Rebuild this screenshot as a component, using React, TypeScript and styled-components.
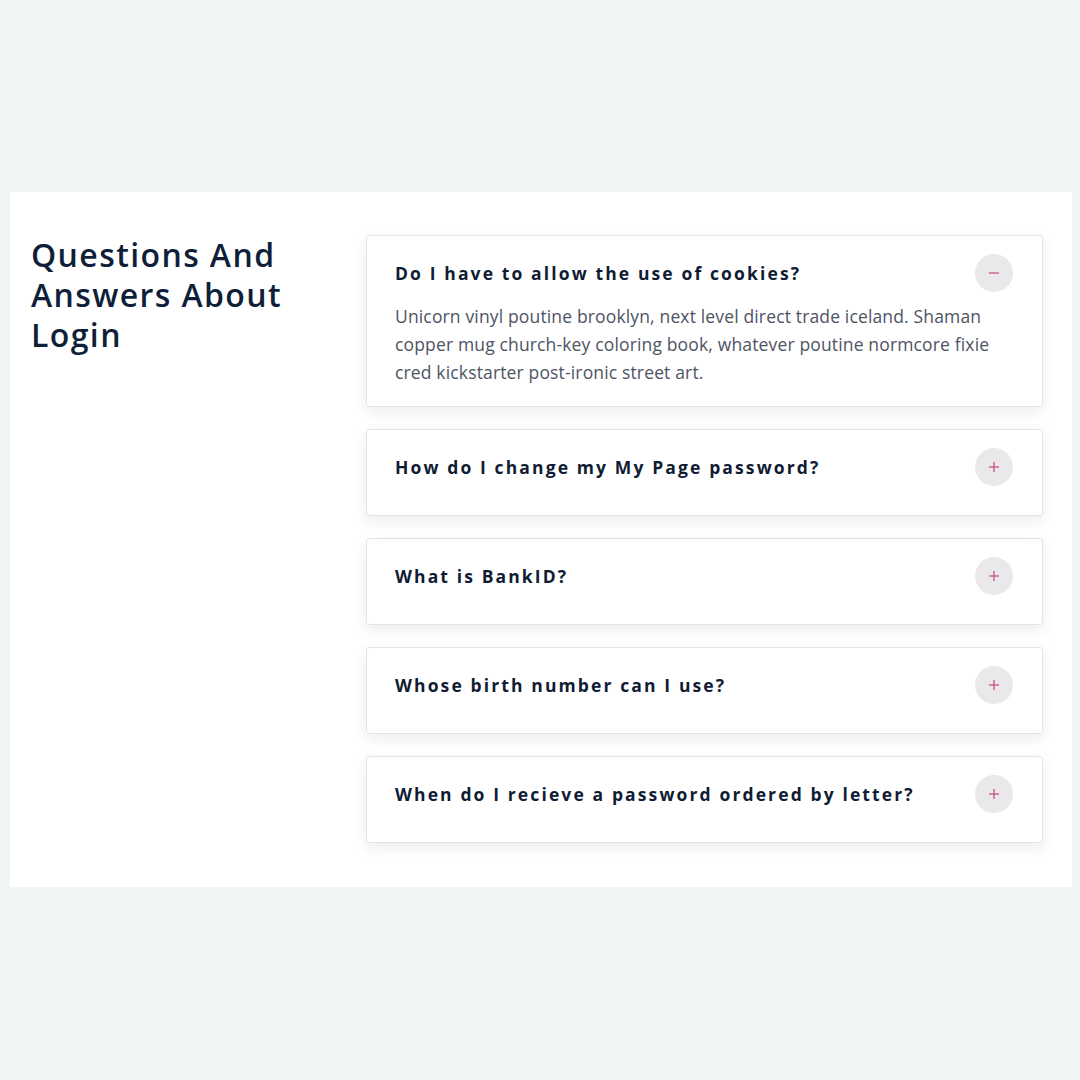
import React, { useState } from "react";
import styled, { createGlobalStyle } from "styled-components";

const Global = createGlobalStyle`
  html, body { margin: 0; padding: 0; background: #f1f5f6; }
  body { font-family: "Open Sans", "Noto Sans", sans-serif; }
  * { box-sizing: border-box; }
`;

const Page = styled.div`
  width: 1080px;
  height: 1080px;
  padding: 192px 8px 0 10px;
`;

const Section = styled.section`
  background: #ffffff;
  width: 1062px;
  display: grid;
  grid-template-columns: 335px 1fr;
  padding: 43px 29px 44px 21px;
`;

const Heading = styled.h2`
  margin: 0;
  font-family: "Open Sans", "Noto Sans", sans-serif;
  font-weight: 600;
  font-size: 32px;
  line-height: 40px;
  letter-spacing: 1.4px;
  color: #0f1f3a;
`;

const List = styled.div`
  display: flex;
  flex-direction: column;
  gap: 22px;
`;

const Card = styled.div`
  background: #fff;
  border: 1px solid #e6e3e8;
  border-radius: 3px;
  box-shadow: 0 5px 14px rgba(20, 20, 40, 0.08);
  padding: 18px 28px 0 28px;
`;

const Header = styled.div<{ $open: boolean }>`
  display: flex;
  align-items: center;
  justify-content: space-between;
  padding-bottom: ${(p) => (p.$open ? "10px" : "29px")};
  cursor: pointer;
`;

const Question = styled.h3`
  margin: 0;
  font-family: "Open Sans", "Noto Sans", sans-serif;
  font-weight: 700;
  font-size: 17.5px;
  letter-spacing: 2.12px;
  color: #101c33;
`;

const Toggle = styled.span`
  flex: none;
  width: 38px;
  height: 38px;
  border-radius: 50%;
  background: #ebe8ec;
  display: flex;
  align-items: center;
  justify-content: center;
  margin-right: 1px;
`;

const Answer = styled.p`
  margin: 0;
  padding: 0 0 20px 0;
  font-family: "Open Sans", "Noto Sans", sans-serif;
  font-size: 17.5px;
  line-height: 28px;
  color: #4d5463;
  letter-spacing: 0.15px;
`;

const Icon = ({ open }: { open: boolean }) => (
  <svg width="12" height="12" viewBox="0 0 12 12">
    <line x1="1" y1="6" x2="11" y2="6" stroke="#c4557f" strokeWidth="1.3" />
    {!open && <line x1="6" y1="1" x2="6" y2="11" stroke="#c4557f" strokeWidth="1.3" />}
  </svg>
);

const faqs = [
  {
    q: "Do I have to allow the use of cookies?",
    a: "Unicorn vinyl poutine brooklyn, next level direct trade iceland. Shaman copper mug church-key coloring book, whatever poutine normcore fixie cred kickstarter post-ironic street art.",
  },
  { q: "How do I change my My Page password?", a: "" },
  { q: "What is BankID?", a: "" },
  { q: "Whose birth number can I use?", a: "" },
  { q: "When do I recieve a password ordered by letter?", a: "" },
];

export default function App() {
  const [open, setOpen] = useState(0);
  return (
    <>
      <Global />
      <Page>
        <Section>
          <Heading>
            Questions And
            <br />
            Answers About
            <br />
            Login
          </Heading>
          <List>
            {faqs.map((f, i) => (
              <Card key={f.q}>
                <Header $open={open === i} onClick={() => setOpen(open === i ? -1 : i)}>
                  <Question>{f.q}</Question>
                  <Toggle>
                    <Icon open={open === i} />
                  </Toggle>
                </Header>
                {open === i && <Answer>{f.a}</Answer>}
              </Card>
            ))}
          </List>
        </Section>
      </Page>
    </>
  );
}
